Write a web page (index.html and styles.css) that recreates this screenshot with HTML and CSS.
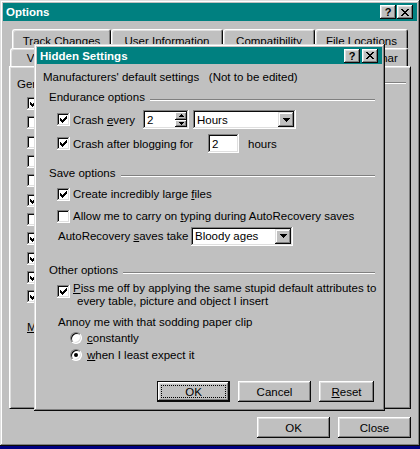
FILE: index.html
```html
<!DOCTYPE html>
<html>
<head>
	<title>Options</title>
<link rel="stylesheet" href="styles.css">
</head>
<body>

<svg class="defs" width="0" height="0">
	<symbol id="tick" viewBox="0 0 7 7"><path d="M6 0h1v1H6z M5 1h2v1H5z M0 2h1v1H0z M4 2h3v1H4z M0 3h2v1H0z M3 3h3v1H3z M0 4h5v1H0z M1 5h3v1H1z M2 6h1v1H2z"/></symbol>
	<symbol id="cross" viewBox="0 0 8 7"><path d="M0 0h2v1H0z M6 0h2v1H6z M1 1h2v1H1z M5 1h2v1H5z M2 2h4v1H2z M3 3h2v1H3z M2 4h4v1H2z M1 5h2v1H1z M5 5h2v1H5z M0 6h2v1H0z M6 6h2v1H6z"/></symbol>
	<symbol id="down" viewBox="0 0 7 4"><path d="M0 0h7v1H0z M1 1h5v1H1z M2 2h3v1H2z M3 3h1v1H3z"/></symbol>
	<symbol id="up-small" viewBox="0 0 5 3"><path d="M2 0h1v1H2z M1 1h3v1H1z M0 2h5v1H0z"/></symbol>
	<symbol id="down-small" viewBox="0 0 5 3"><path d="M0 0h5v1H0z M1 1h3v1H1z M2 2h1v1H2z"/></symbol>
</svg>

<div class="window">
	<div class="titlebar">
		<span class="title">Options</span>
		<div class="title-buttons">
			<span class="tbtn">?</span>
			<span class="tbtn"><svg width="8" height="7"><use href="#cross"/></svg></span>
		</div>
	</div>

	<div class="window-body">
		<div class="tabrow back">
			<div class="tab tab-track">Track Changes</div>
			<div class="tab tab-user">User Information</div>
			<div class="tab tab-compat">Compatibility</div>
			<div class="tab tab-files">File Locations</div>
		</div>
		<div class="tabrow front">
			<div class="tab tab-view">View</div>
			<div class="tab tab-general">General</div>
			<div class="tab tab-edit">Edit</div>
			<div class="tab tab-print">Print</div>
			<div class="tab tab-save">Save</div>
			<div class="tab tab-spelling">Spelling &amp; Grammar</div>
		</div>

		<div class="panel">
			<div class="panel-head"><span>General options</span><div class="etch"></div></div>
			<div class="bglist">
				<div class="bgrow"><span class="cb"><svg><use href="#tick"/></svg></span><span>Background repagination</span></div>
				<div class="bgrow"><span class="cb"></span><span>Help for WordPerfect users</span></div>
				<div class="bgrow"><span class="cb"></span><span>Navigation keys for WordPerfect users</span></div>
				<div class="bgrow"><span class="cb"></span><span>Blue background, white text</span></div>
				<div class="bgrow"><span class="cb"></span><span>Provide feedback with sound</span></div>
				<div class="bgrow"><span class="cb"><svg><use href="#tick"/></svg></span><span>Provide feedback with animation</span></div>
				<div class="bgrow"><span class="cb"></span><span>Confirm conversion at Open</span></div>
				<div class="bgrow"><span class="cb"><svg><use href="#tick"/></svg></span><span>Update automatic links at Open</span></div>
				<div class="bgrow"><span class="cb"><svg><use href="#tick"/></svg></span><span>Mail as attachment</span></div>
				<div class="bgrow"><span class="cb"><svg><use href="#tick"/></svg></span><span>Recently used file list</span></div>
				<div class="bgrow"><span class="cb"><svg><use href="#tick"/></svg></span><span>Macro virus protection</span></div>
			</div>
			<div class="measure"><u>M</u>easurement units:</div>
		</div>

		<div class="buttonrow">
			<button class="btn">OK</button>
			<button class="btn">Close</button>
		</div>
	</div>
</div>

<div class="dialog">
	<div class="titlebar small">
		<span class="title">Hidden Settings</span>
		<div class="title-buttons">
			<span class="tbtn">?</span>
			<span class="tbtn"><svg width="8" height="7"><use href="#cross"/></svg></span>
		</div>
	</div>

	<div class="dialog-body">
		<div class="line">Manufacturers' default settings&nbsp;&nbsp;&nbsp;(Not to be edited)</div>

		<div class="group-head mt4"><span>Endurance options</span><div class="etch"></div></div>
		<div class="row-field mt5">
			<span class="cb indent-cb"><svg><use href="#tick"/></svg></span>
			<span class="cb-label lbl-every">Crash <u>e</u>very</span>
			<div class="spin">
				<span class="field-text">2</span>
				<div class="spin-buttons">
					<span class="spin-btn"><svg width="5" height="3"><use href="#up-small"/></svg></span>
					<span class="spin-btn"><svg width="5" height="3"><use href="#down-small"/></svg></span>
				</div>
			</div>
			<div class="combo combo-hours">
				<span class="field-text">Hours</span>
				<span class="drop"><svg width="7" height="4"><use href="#down"/></svg></span>
			</div>
		</div>
		<div class="row-field mt5">
			<span class="cb indent-cb"><svg><use href="#tick"/></svg></span>
			<span class="cb-label lbl-blogging">Crash after blogging for</span>
			<div class="field field-hours"><span class="field-text">2</span></div>
			<span class="unit">hours</span>
		</div>

		<div class="group-head mt12"><span>Save options</span><div class="etch"></div></div>
		<div class="row mt5">
			<span class="cb indent-cb"><svg><use href="#tick"/></svg></span>
			<span class="cb-label">Create incredibly large <u>f</u>iles</span>
		</div>
		<div class="row mt6">
			<span class="cb indent-cb"></span>
			<span class="cb-label">Allow me to carry on <u>t</u>yping during AutoRecovery saves</span>
		</div>
		<div class="row-field tall mt2">
			<span class="plain-label lbl-autorec">AutoRecovery <u>s</u>aves take</span>
			<div class="combo combo-ages">
				<span class="field-text">Bloody ages</span>
				<span class="drop"><svg width="7" height="4"><use href="#down"/></svg></span>
			</div>
		</div>

		<div class="group-head mt16"><span>Other options</span><div class="etch"></div></div>
		<div class="row-wrap mt4">
			<span class="cb indent-cb"><svg><use href="#tick"/></svg></span>
			<span class="cb-label"><u>P</u>iss me off by applying the same stupid default attributes to<span class="second">every table, picture and object I insert</span></span>
		</div>
		<div class="row mt6">
			<span class="plain-label">Annoy me with that sodding paper clip</span>
		</div>
		<div class="row">
			<span class="radio"></span>
			<span class="radio-label"><u>c</u>onstantly</span>
		</div>
		<div class="row mt1">
			<span class="radio checked"></span>
			<span class="radio-label"><u>w</u>hen I least expect it</span>
		</div>

		<div class="dialog-buttons">
			<button class="btn default">OK</button>
			<button class="btn">Cancel</button>
			<button class="btn btn-reset"><u>R</u>eset</button>
		</div>
	</div>
</div>

</body>
</html>
```

FILE: styles.css
```css
	body {
		margin:0;
		background-color:#000080;
		font-family:"Liberation Sans", Arial, sans-serif;
		font-size:11.5px;
		color:#000;}

	.defs {
		position:absolute;
		width:0;
		height:0;}

	.window {
		width:420px;
		height:446px;
		box-sizing:border-box;
		padding:3px;
		background-color:#c0c0c0;
		box-shadow:inset -1px -1px #0a0a0a, inset 1px 1px #dfdfdf, inset -2px -2px #808080, inset 2px 2px #fff;
		display:flex;
		flex-direction:column;}

	.titlebar {
		height:18px;
		background-color:#008080;
		display:flex;
		align-items:center;
		justify-content:space-between;
		padding:0 4px 0 3px;}

	.titlebar.small {
		height:17px;}

	.title {
		color:#fff;
		font-weight:bold;
		font-size:11.5px;}

	.title-buttons {
		display:flex;
		gap:1px;}

	.dialog .title-buttons {
		gap:2px;}

	.tbtn {
		width:16px;
		height:14px;
		box-sizing:border-box;
		background-color:#c0c0c0;
		box-shadow:inset -1px -1px #0a0a0a, inset 1px 1px #fff, inset -2px -2px #808080, inset 2px 2px #dfdfdf;
		display:flex;
		align-items:center;
		justify-content:center;
		font-weight:bold;
		font-size:11px;
		line-height:14px;}

	.window-body {
		display:flex;
		flex-direction:column;
		padding:8px 6px 0 6px;}

	/* tabs */

	.tabrow {
		display:flex;}

	.tabrow.back {
		height:19px;
		margin-left:3px;}

	.tabrow.front {
		height:18px;
		margin-left:1px;}

	.tab {
		box-sizing:border-box;
		border-top:1px solid #fff;
		border-left:1px solid #fff;
		border-right:1px solid #0a0a0a;
		border-radius:3px 3px 0 0;
		box-shadow:inset 1px 1px #dfdfdf, inset -1px 0 #808080;
		text-align:center;
		overflow:hidden;
		white-space:nowrap;}

	.back .tab {
		padding-top:4px;
		line-height:14px;}

	.front .tab {
		padding-top:2px;
		line-height:14px;}

	.tab-track { width:99px; }
	.tab-user { width:112px; }
	.tab-compat { width:92px; }
	.tab-files { width:93px; }
	.tab-view { width:58px; }
	.tab-general { width:62px; }
	.tab-edit { width:48px; }
	.tab-print { width:52px; }
	.tab-save { width:54px; }
	.tab-spelling { width:124px; }

	.panel {
		height:343px;
		box-sizing:border-box;
		border-top:1px solid #fff;
		border-left:1px solid #fff;
		border-right:1px solid #0a0a0a;
		border-bottom:1px solid #0a0a0a;
		box-shadow:inset 1px 1px #dfdfdf, inset -1px -1px #808080;
		padding:9px 4px 0 7px;
		display:flex;
		flex-direction:column;}

	.panel-head {
		height:16px;
		line-height:16px;
		display:flex;}

	.etch {
		flex:1;
		height:0;
		border-top:1px solid #808080;
		border-bottom:1px solid #fff;
		margin-left:5px;}

	.panel-head .etch {
		margin-top:6px;}

	.bglist {
		margin-top:2px;
		display:flex;
		flex-direction:column;}

	.bgrow {
		height:19.3px;
		display:flex;
		align-items:center;
		gap:4px;
		padding-left:10px;
		white-space:nowrap;}

	.measure {
		margin-top:13px;
		height:16px;
		line-height:16px;
		padding-left:10px;}

	/* controls */

	.cb {
		width:13px;
		height:13px;
		box-sizing:border-box;
		flex-shrink:0;
		background-color:#fff;
		box-shadow:inset -1px -1px #fff, inset 1px 1px #808080, inset -2px -2px #dfdfdf, inset 2px 2px #0a0a0a;
		display:flex;
		align-items:center;
		justify-content:center;}

	.cb svg {
		width:7px;
		height:7px;}

	.radio {
		width:12px;
		height:12px;
		box-sizing:border-box;
		flex-shrink:0;
		margin-left:27px;
		border-radius:50%;
		border:1px solid;
		border-color:#808080 #fff #fff #808080;
		background-color:#fff;
		box-shadow:inset 1px 1px #0a0a0a, inset -1px -1px #dfdfdf;
		display:flex;
		align-items:center;
		justify-content:center;}

	.radio.checked::after {
		content:"";
		width:4px;
		height:4px;
		border-radius:50%;
		background-color:#000;}

	.radio-label {
		margin-left:5px;}

	.field, .spin, .combo {
		height:19px;
		box-sizing:border-box;
		padding:2px;
		background-color:#fff;
		box-shadow:inset -1px -1px #fff, inset 1px 1px #808080, inset -2px -2px #dfdfdf, inset 2px 2px #0a0a0a;
		display:flex;
		align-items:center;
		flex-shrink:0;}

	.field-text {
		flex:1;
		padding-left:2px;
		white-space:nowrap;}

	.spin {
		width:46px;}

	.spin-buttons {
		width:12px;
		height:15px;
		display:flex;
		flex-direction:column;}

	.spin-btn {
		flex:1;
		background-color:#c0c0c0;
		box-shadow:inset -1px -1px #0a0a0a, inset 1px 1px #fff, inset -2px -2px #808080;
		display:flex;
		align-items:center;
		justify-content:center;}

	.combo-hours {
		width:103px;
		margin-left:4px;}

	.combo-ages {
		width:102px;}

	.drop {
		width:16px;
		height:15px;
		box-sizing:border-box;
		background-color:#c0c0c0;
		box-shadow:inset -1px -1px #0a0a0a, inset 1px 1px #dfdfdf, inset -2px -2px #808080, inset 2px 2px #fff;
		display:flex;
		align-items:center;
		justify-content:center;}

	.field-hours {
		width:31px;}

	.unit {
		margin-left:9px;}

	/* hidden settings dialog */

	.dialog {
		position:absolute;
		left:34px;
		top:44px;
		width:351px;
		height:367px;
		box-sizing:border-box;
		padding:3px;
		background-color:#c0c0c0;
		box-shadow:inset -1px -1px #0a0a0a, inset 1px 1px #dfdfdf, inset -2px -2px #808080, inset 2px 2px #fff;
		display:flex;
		flex-direction:column;}

	.dialog-body {
		display:flex;
		flex-direction:column;
		padding:5px 7px 0 6px;}

	.line, .row {
		height:16px;
		line-height:16px;
		display:flex;
		align-items:center;
		white-space:nowrap;}

	.group-head {
		height:16px;
		line-height:16px;
		display:flex;
		padding-left:6px;}

	.group-head .etch {
		margin-top:10px;}

	.row-field {
		height:19px;
		display:flex;
		align-items:center;
		white-space:nowrap;}

	.row-field.tall {
		height:20px;}

	.row-wrap {
		height:26px;
		display:flex;
		align-items:flex-start;
		line-height:13px;
		white-space:nowrap;}

	.row-wrap .cb {
		margin-top:3px;}

	.second {
		display:block;
		padding-left:4px;}

	.indent-cb {
		margin-left:14px;}

	.cb-label {
		margin-left:3px;}

	.lbl-every {
		width:70px;
		flex-shrink:0;}

	.lbl-blogging {
		width:135px;
		flex-shrink:0;}

	.plain-label {
		margin-left:15px;}

	.lbl-autorec {
		width:133px;
		flex-shrink:0;}

	.mt1 { margin-top:1px; }
	.mt2 { margin-top:2px; }
	.mt4 { margin-top:4px; }
	.mt5 { margin-top:5px; }
	.mt6 { margin-top:6px; }
	.mt12 { margin-top:12px; }
	.mt16 { margin-top:16px; }

	/* buttons */

	.btn {
		width:73px;
		height:21px;
		padding:0;
		border:0;
		font:inherit;
		color:#000;
		background-color:#c0c0c0;
		box-shadow:inset -1px -1px #0a0a0a, inset 1px 1px #fff, inset -2px -2px #808080, inset 2px 2px #dfdfdf;
		position:relative;}

	.btn.default {
		box-shadow:inset -1px -1px #0a0a0a, inset 1px 1px #0a0a0a, inset -2px -2px #0a0a0a, inset 2px 2px #fff, inset -3px -3px #808080, inset 3px 3px #dfdfdf;}

	.btn.default::after {
		content:"";
		position:absolute;
		left:4px;
		top:4px;
		right:4px;
		bottom:4px;
		border:1px dotted #000;}

	.btn-reset {
		width:55px;}

	.dialog-buttons {
		margin-top:18px;
		display:flex;
		justify-content:flex-end;
		gap:8px;
		padding-right:1px;}

	.buttonrow {
		margin-top:8px;
		display:flex;
		justify-content:flex-end;
		gap:8px;}
```
